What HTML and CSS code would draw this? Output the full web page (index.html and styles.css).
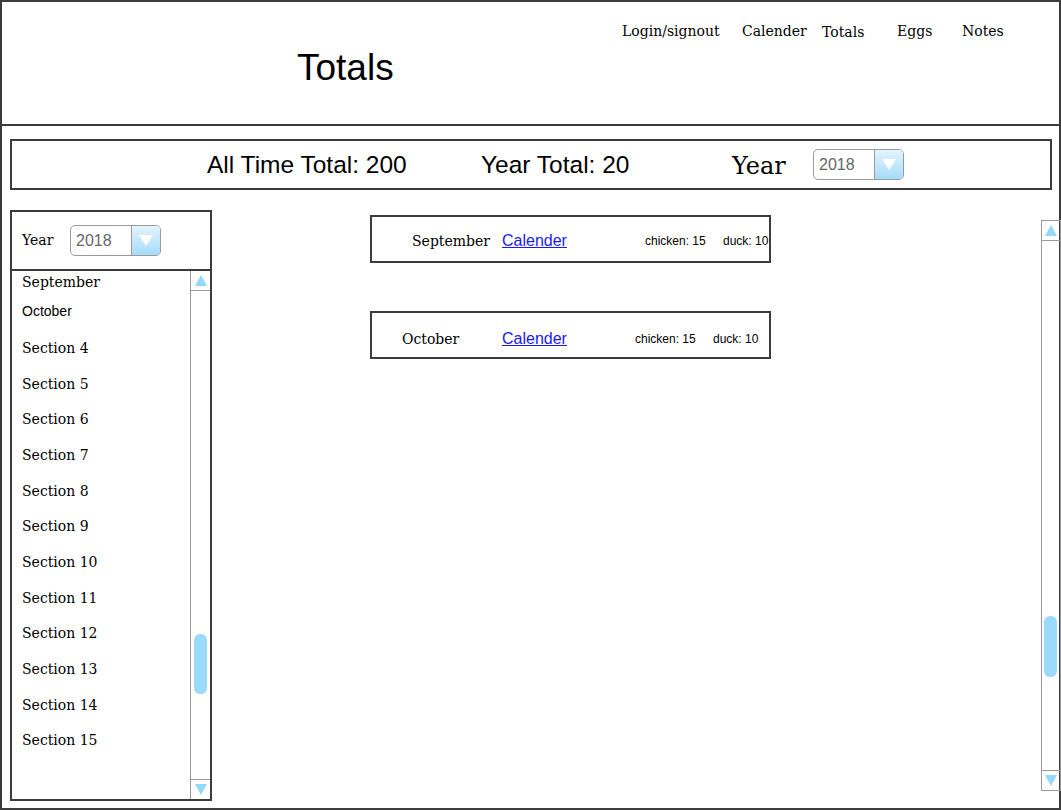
FILE: index.html
```html
<!DOCTYPE html>
<html lang="en">
<head>
<meta charset="utf-8">
<title>Totals</title>
<link rel="stylesheet" href="styles.css">
</head>
<body>
<div class="frame">
  <header class="header">
    <h1 class="title">Totals</h1>
    <nav class="nav">
      <span class="nav-item">Login/signout</span>
      <span class="nav-item">Calender</span>
      <span class="nav-item nav-item--low">Totals</span>
      <span class="nav-item">Eggs</span>
      <span class="nav-item">Notes</span>
    </nav>
  </header>
  <main class="main">
    <section class="stats">
      <span class="stat">All Time Total: 200</span>
      <span class="stat">Year Total: 20</span>
      <span class="stat-year">Year</span>
      <div class="select">
        <span class="select-value">2018</span>
        <span class="select-btn"><span class="tri-down"></span></span>
      </div>
    </section>
    <div class="lower">
      <aside class="panel">
        <div class="panel-head">
          <span class="panel-label">Year</span>
          <div class="select">
            <span class="select-value">2018</span>
            <span class="select-btn"><span class="tri-down"></span></span>
          </div>
        </div>
        <div class="panel-list">
          <ul class="items">
            <li class="item item--first">September</li>
            <li class="item item--sans">October</li>
            <li class="item">Section 4</li>
            <li class="item">Section 5</li>
            <li class="item">Section 6</li>
            <li class="item">Section 7</li>
            <li class="item">Section 8</li>
            <li class="item">Section 9</li>
            <li class="item">Section 10</li>
            <li class="item">Section 11</li>
            <li class="item">Section 12</li>
            <li class="item">Section 13</li>
            <li class="item">Section 14</li>
            <li class="item">Section 15</li>
          </ul>
          <div class="scroll scroll--panel">
            <div class="scroll-btn scroll-btn--up"><span class="tri-up"></span></div>
            <div class="scroll-track"><div class="thumb thumb--panel"></div></div>
            <div class="scroll-btn scroll-btn--down"><span class="tri-dn"></span></div>
          </div>
        </div>
      </aside>
      <section class="content">
        <div class="card card--sep">
          <span class="card-label">September</span>
          <a class="card-link" href="#">Calender</a>
          <span class="card-count">chicken: 15</span>
          <span class="card-count">duck: 10</span>
        </div>
        <div class="card card--oct">
          <span class="card-label">October</span>
          <a class="card-link" href="#">Calender</a>
          <span class="card-count">chicken: 15</span>
          <span class="card-count">duck: 10</span>
        </div>
      </section>
      <div class="scroll scroll--page">
        <div class="scroll-btn scroll-btn--up"><span class="tri-up"></span></div>
        <div class="scroll-track"><div class="thumb thumb--page"></div></div>
        <div class="scroll-btn scroll-btn--down"><span class="tri-dn"></span></div>
      </div>
    </div>
  </main>
</div>
</body>
</html>
```

FILE: styles.css
```css
* { box-sizing: border-box; }
html, body { margin: 0; padding: 0; background: #fff; }
body {
  width: 1061px;
  height: 811px;
  overflow: hidden;
  font-family: "DejaVu Serif", serif;
  color: #000;
}

.frame {
  width: 1061px;
  height: 810px;
  border: 2px solid #3c3c3c;
  display: flex;
  flex-direction: column;
}

/* Header */
.header {
  height: 124px;
  border-bottom: 2px solid #3c3c3c;
  display: flex;
  align-items: flex-start;
  padding-left: 295px;
  flex: none;
}
.title {
  margin: 47px 0 0 0;
  width: 325px;
  font-family: "Liberation Sans", Arial, sans-serif;
  font-weight: normal;
  font-size: 37px;
  line-height: 37px;
}
.nav {
  display: grid;
  grid-template-columns: 120px 80px 75px 65px auto;
  margin-top: 22px;
}
.nav-item {
  font-family: "DejaVu Serif", serif;
  font-size: 14px;
  line-height: 14px;
  white-space: nowrap;
}
.nav-item--low { margin-top: 1px; }

/* Main */
.main {
  flex: 1;
  display: flex;
  flex-direction: column;
  padding: 13px 0 0 8px;
}

.stats {
  height: 51px;
  margin-right: 7px;
  border: 2px solid #3c3c3c;
  display: grid;
  grid-template-columns: 274px 251px 81px 91px;
  align-items: center;
  padding-left: 195px;
  flex: none;
}
.stat {
  font-family: "Liberation Sans", Arial, sans-serif;
  font-size: 24.5px;
  line-height: 24px;
  white-space: nowrap;
}
.stat-year {
  font-family: "DejaVu Serif", serif;
  font-size: 24px;
  line-height: 24px;
  margin-top: 2px;
}

/* Select */
.select {
  width: 91px;
  height: 31px;
  border: 1px solid #9a9a9a;
  border-radius: 5px;
  display: flex;
  overflow: hidden;
  background: #fff;
}
.select-value {
  flex: 1;
  padding-left: 5px;
  font-family: "Liberation Sans", Arial, sans-serif;
  font-size: 16px;
  line-height: 29px;
  color: #666;
}
.select-btn {
  width: 29px;
  border-left: 1px solid #9a9a9a;
  background: linear-gradient(#e3f4fe, #a6dbfb);
  display: flex;
  align-items: center;
  justify-content: center;
}
.tri-down {
  width: 0;
  height: 0;
  border-left: 7px solid transparent;
  border-right: 7px solid transparent;
  border-top: 11px solid #fff;
}

/* Lower area */
.lower {
  flex: 1;
  display: flex;
  align-items: flex-start;
  margin-top: 20px;
}

.panel {
  width: 202px;
  height: 591px;
  border: 2px solid #3c3c3c;
  display: flex;
  flex-direction: column;
  flex: none;
}
.panel-head {
  height: 59px;
  border-bottom: 2px solid #3c3c3c;
  display: flex;
  align-items: center;
  padding-left: 10px;
  flex: none;
}
.panel-label {
  width: 48px;
  font-size: 14px;
  line-height: 14px;
  margin-top: -2px;
}
.panel-list {
  flex: 1;
  display: flex;
}
.items {
  list-style: none;
  margin: 0;
  padding: 0 0 0 10px;
  flex: 1;
}
.item {
  height: 35.7px;
  display: flex;
  align-items: center;
  font-size: 14px;
  line-height: 14px;
}
.item--first { height: 21px; }
.item--sans {
  height: 38px;
  font-family: "Liberation Sans", Arial, sans-serif;
  font-size: 14px;
}

/* Scrollbars */
.scroll {
  display: flex;
  flex-direction: column;
  flex: none;
}
.scroll--panel {
  width: 20px;
  border-left: 1px solid #9a9a9a;
}
.scroll--page {
  width: 20px;
  height: 571px;
  margin-top: 10px;
  margin-right: -2px;
  border: 1px solid #9a9a9a;
}
.scroll-btn {
  height: 20px;
  display: flex;
  align-items: center;
  justify-content: center;
  flex: none;
}
.scroll-btn--up { border-bottom: 1px solid #9a9a9a; }
.scroll-btn--down { border-top: 1px solid #9a9a9a; }
.scroll-track { flex: 1; }
.tri-up {
  width: 0;
  height: 0;
  border-left: 6px solid transparent;
  border-right: 6px solid transparent;
  border-bottom: 11px solid #96d7fc;
}
.tri-dn {
  width: 0;
  height: 0;
  border-left: 6px solid transparent;
  border-right: 6px solid transparent;
  border-top: 11px solid #96d7fc;
}
.thumb {
  width: 13px;
  background: #99dafd;
  border-radius: 6px;
}
.thumb--panel {
  height: 60px;
  margin: 343px 0 0 3px;
}
.thumb--page {
  height: 61px;
  margin: 375px 0 0 2px;
}

/* Content cards */
.content {
  flex: 1;
  padding-left: 158px;
  padding-top: 5px;
}
.card {
  width: 401px;
  height: 48px;
  border: 2px solid #3c3c3c;
  display: grid;
  align-items: center;
  white-space: nowrap;
}
.card--sep {
  grid-template-columns: 90px 143px 78px auto;
  padding: 3px 0 0 40px;
}
.card--oct {
  grid-template-columns: 100px 133px 78px auto;
  padding: 7px 0 0 30px;
  margin-top: 48px;
}
.card-label {
  font-size: 14px;
  line-height: 14px;
}
.card-link {
  font-family: "Liberation Sans", Arial, sans-serif;
  font-size: 16px;
  line-height: 16px;
  color: #1a1aee;
  text-decoration: underline;
}
.card-count {
  font-family: "Liberation Sans", Arial, sans-serif;
  font-size: 12px;
  line-height: 12px;
}
```
